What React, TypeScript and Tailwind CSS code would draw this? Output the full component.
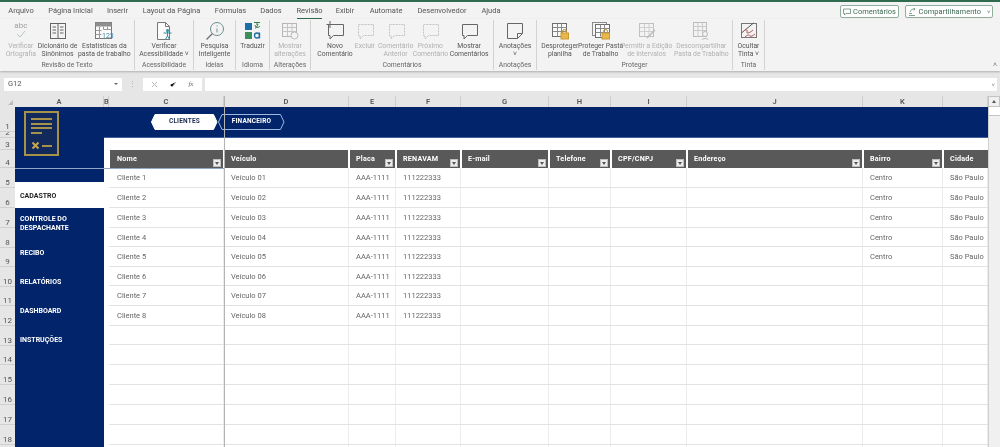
import React from "react";

const FONT = "[font-family:'Roboto','Open_Sans',sans-serif]";

const S = ({ children, w = 22, h = 20 }: { children: React.ReactNode; w?: number; h?: number }) => (
  <svg width={w} height={h} viewBox={`0 0 ${w} ${h}`} fill="none" strokeWidth="1">
    {children}
  </svg>
);

const Comment = ({ c, dash, extra }: { c: string; dash?: boolean; extra?: React.ReactNode }) => (
  <S>
    <path
      d="M4.500 3.500h15v11h-10l-3.500 3.500v-3.500h-1.500z"
      stroke={c}
      strokeDasharray={dash ? "2 1" : undefined}
    />
    {extra}
  </S>
);

const TableLock = ({ second }: { second?: boolean }) => (
  <S>
    {second && <rect x="2.500" y="1.500" width="14" height="13" stroke="#8a8a8a" fill="#f5f5f5" />}
    <rect x={second ? 5.5 : 3.5} y={second ? 3.5 : 2.5} width="14" height="13" stroke="#6d6d6d" fill="#fafafa" />
    <path
      d={second ? "M5.500 7.500h14M5.500 11.500h14M10.500 3.500v12M14.500 3.500v12" : "M3.500 6.500h14M3.500 10.500h14M8.500 2.500v13M12.500 2.500v13"}
      stroke="#8a8a8a"
    />
    <path d="M13.500 12.500v-2a2 2 0 0 1 4 0v2" stroke="#b98b2c" />
    <rect x="12" y="12" width="7.500" height="6" fill="#e8b84a" stroke="#c79a34" />
  </S>
);

const icons: Record<string, React.ReactNode> = {
  abc: (
    <div className="flex flex-col items-center h-[20px] text-[8px] leading-[9px] text-[#a0a0a0]">
      abc
      <S w={14} h={9}>
        <path d="M3 4l3 3 5-6" stroke="#b5c9bd" />
      </S>
    </div>
  ),
  book: (
    <S>
      <rect x="3.500" y="2.500" width="15" height="15" stroke="#666" />
      <path d="M11 2.500v15M5.500 6h3.500M5.500 9h3.500M5.500 12h3.500M13 6h3.500M13 9h3.500M13 12h3.500" stroke="#666" />
    </S>
  ),
  stats: (
    <S>
      <rect x="2.500" y="1.500" width="16" height="16" stroke="#777" fill="#fbfbfb" />
      <rect x="2.500" y="1.500" width="16" height="4" fill="#8f8f8f" />
      <path d="M2.500 9.500h6M2.500 13.500h6M6.500 5.500v12M10.500 5.500v3M14.500 5.500v3M10.500 8.500h8" stroke="#999" />
      <text x="9" y="16.500" fontSize="7" fill="#3b86a8" fontFamily="Roboto">123</text>
    </S>
  ),
  access: (
    <S>
      <path d="M4.500 1.500h8l4 4v13h-12z" stroke="#777" fill="#fcfcfc" />
      <path d="M12.500 1.500v4h4" stroke="#777" />
      <circle cx="14.500" cy="9.500" r="1.500" fill="#2f8f9f" />
      <path d="M10.500 12h8M14.500 11v4l-2.500 4M14.500 15l2.500 4" stroke="#2f8f9f" />
    </S>
  ),
  search: (
    <S>
      <circle cx="13" cy="8" r="6.500" stroke="#6f8f8f" />
      <path d="M8.500 12.500l-6 6" stroke="#777" strokeWidth="1.500" />
      <path d="M13 7.500v4M13 4.500v1" stroke="#6f8f8f" />
    </S>
  ),
  translate: (
    <S>
      <rect x="3" y="2" width="7" height="7" fill="#1c6fa8" />
      <rect x="3" y="11" width="7" height="7" fill="#3c8f5a" />
      <path d="M12 1.500h6M15 1v3M13 4c0 3 4 3 5 1M16 3c-1 3-2 4-3 4" stroke="#2e7d4a" />
      <circle cx="15" cy="14.500" r="2.500" stroke="#1c6fa8" strokeWidth="1.300" />
      <path d="M17.500 11.500v6" stroke="#1c6fa8" strokeWidth="1.300" />
    </S>
  ),
  changes: (
    <S>
      <rect x="3.500" y="2.500" width="14" height="13" stroke="#b5b5b5" />
      <path d="M3.500 6.500h14M3.500 10.500h14M8.500 2.500v13M13 2.500v13" stroke="#c4c4c4" />
      <circle cx="15.500" cy="14.500" r="3.500" stroke="#bbb" fill="#f3f3f3" />
    </S>
  ),
  newc: <Comment c="#666" extra={<path d="M6 0v7M2.500 3.500h7" stroke="#666" />} />,
  del: <Comment c="#c2c2c2" dash />,
  prev: <Comment c="#c2c2c2" dash />,
  next: <Comment c="#c2c2c2" dash />,
  show: <Comment c="#666" />,
  note: (
    <S>
      <path d="M3.500 2.500h15v10l-5 5h-10z" stroke="#666" />
      <path d="M18.500 12.500h-5v5" stroke="#666" />
    </S>
  ),
  lock1: <TableLock />,
  lock2: <TableLock second />,
  perm: (
    <S>
      <rect x="3.500" y="2.500" width="14" height="13" stroke="#c0c0c0" />
      <path d="M3.500 6.500h14M3.500 10.500h14M8.500 2.500v13M13 2.500v13" stroke="#cfcfcf" />
      <path d="M11 17l8-8" stroke="#bbb" strokeWidth="1.500" />
    </S>
  ),
  share: (
    <S>
      <rect x="3.500" y="1.500" width="13" height="14" stroke="#bcbcbc" />
      <path d="M3.500 5.500h13M3.500 9.500h13M8 1.500v14M12.500 1.500v14" stroke="#cacaca" />
      <circle cx="15" cy="13" r="2.500" stroke="#bbb" fill="#f3f3f3" />
      <path d="M12 19c0-2 6-2 6 0" stroke="#bbb" />
    </S>
  ),
  ink: (
    <S>
      <rect x="3.500" y="2.500" width="15" height="14" stroke="#777" />
      <path d="M3.500 12l12-10" stroke="#555" />
      <path d="M5 11c3-4 5-2 4 0s3 1 6-2" stroke="#b05a5a" />
      <path d="M7 16c3-3 5-2 5-1s3 0 5-2" stroke="#b05a5a" />
    </S>
  ),
};

type Item = { icon: string; lines: string[]; w: string; off?: boolean };
type Group = { label: string; w: string; pad?: string; items: Item[] };

const groups: Group[] = [
  {
    label: "Revisão de Texto",
    w: "w-[135px]",
    pad: "pl-[3px] pr-[2px]",
    items: [
      { icon: "abc", lines: ["Verificar", "Ortografia"], w: "w-[36px]", off: true },
      { icon: "book", lines: ["Dicionário de", "Sinônimos"], w: "w-[38px]" },
      { icon: "stats", lines: ["Estatísticas da", "pasta de trabalho"], w: "w-[56px]" },
    ],
  },
  {
    label: "Acessibilidade",
    w: "w-[59px]",
    items: [{ icon: "access", lines: ["Verificar", "Acessibilidade ˅"], w: "w-[58px]" }],
  },
  {
    label: "Ideias",
    w: "w-[42px]",
    items: [{ icon: "search", lines: ["Pesquisa", "Inteligente"], w: "w-[41px]" }],
  },
  {
    label: "Idioma",
    w: "w-[34px]",
    items: [{ icon: "translate", lines: ["Traduzir"], w: "w-[33px]" }],
  },
  {
    label: "Alterações",
    w: "w-[41px]",
    items: [{ icon: "changes", lines: ["Mostrar", "alterações"], w: "w-[40px]", off: true }],
  },
  {
    label: "Comentários",
    w: "w-[183px]",
    pad: "pl-[7px] pr-[2px]",
    items: [
      { icon: "newc", lines: ["Novo", "Comentário"], w: "w-[34px]" },
      { icon: "del", lines: ["Excluir"], w: "w-[26px]", off: true },
      { icon: "prev", lines: ["Comentário", "Anterior"], w: "w-[36px]", off: true },
      { icon: "next", lines: ["Próximo", "Comentário"], w: "w-[34px]", off: true },
      { icon: "show", lines: ["Mostrar", "Comentários"], w: "w-[44px]" },
    ],
  },
  {
    label: "Anotações",
    w: "w-[43px]",
    items: [{ icon: "note", lines: ["Anotações", "˅"], w: "w-[42px]" }],
  },
  {
    label: "Proteger",
    w: "w-[196px]",
    pad: "pl-[3px] pr-[1px]",
    items: [
      { icon: "lock1", lines: ["Desproteger", "planilha"], w: "w-[40px]" },
      { icon: "lock2", lines: ["Proteger Pasta", "de Trabalho"], w: "w-[42px]" },
      { icon: "perm", lines: ["Permitir a Edição", "de Intervalos"], w: "w-[50px]", off: true },
      { icon: "share", lines: ["Descompartilhar", "Pasta de Trabalho"], w: "w-[60px]", off: true },
    ],
  },
  {
    label: "Tinta",
    w: "w-[32px]",
    items: [{ icon: "ink", lines: ["Ocultar", "Tinta ˅"], w: "w-[31px]" }],
  },
];

const tabs = [
  ["Arquivo", "w-[42px]"],
  ["Página Inicial", "w-[57px]"],
  ["Inserir", "w-[37px]"],
  ["Layout da Página", "w-[71px]"],
  ["Fórmulas", "w-[47px]"],
  ["Dados", "w-[34px]"],
  ["Revisão", "w-[43px]"],
  ["Exibir", "w-[28px]"],
  ["Automate", "w-[54px]"],
  ["Desenvolvedor", "w-[58px]"],
  ["Ajuda", "w-[40px]"],
];

const colHeads = [
  ["A", "w-[89px]"],
  ["B", "w-[5px]"],
  ["C", "w-[115px]"],
  ["D", "w-[125px]"],
  ["E", "w-[47px]"],
  ["F", "w-[65px]"],
  ["G", "w-[88px]"],
  ["H", "w-[62px]"],
  ["I", "w-[76px]"],
  ["J", "w-[176px]"],
  ["K", "w-[80px]"],
  ["", "w-[45px]"],
];

const rowHeads = [
  ["1", "h-[25px]"],
  ["2", "h-[6px]"],
  ["3", "h-[12px]"],
  ["4", "h-[18px]"],
  ["5", "h-[20px]"],
  ["6", "h-[20px]"],
  ["7", "h-[20px]"],
  ["8", "h-[20px]"],
  ["9", "h-[19px]"],
  ["10", "h-[20px]"],
  ["11", "h-[19px]"],
  ["12", "h-[20px]"],
  ["13", "h-[20px]"],
  ["14", "h-[19px]"],
  ["15", "h-[20px]"],
  ["16", "h-[20px]"],
  ["17", "h-[20px]"],
  ["18", "h-[20px]"],
];

const GRID =
  "grid grid-cols-[115px_125px_47px_65px_88px_62px_76px_176px_80px_45px]";

const headers: [string, boolean][] = [
  ["Nome", true],
  ["Veículo", false],
  ["Placa", true],
  ["RENAVAM", true],
  ["E-mail", true],
  ["Telefone", true],
  ["CPF/CNPJ", true],
  ["Endereço", true],
  ["Bairro", true],
  ["Cidade", false],
];

const rowHeights = [
  "h-[20px]", "h-[20px]", "h-[20px]", "h-[19px]", "h-[20px]", "h-[19px]", "h-[20px]",
  "h-[20px]", "h-[19px]", "h-[20px]", "h-[20px]", "h-[20px]", "h-[20px]", "h-[20px]", "h-[20px]",
];

function rowCells(i: number): string[] {
  const n = i + 1;
  if (i >= 8) return Array(10).fill("");
  return [
    `Cliente ${n}`,
    `Veículo 0${n}`,
    "AAA-1111",
    "111222333",
    "",
    "",
    "",
    "",
    i < 5 ? "Centro" : "",
    i < 5 ? "São Paulo" : "",
  ];
}

const FilterBtn = () => (
  <span className="absolute right-[2px] bottom-[1px] w-[8px] h-[8px] bg-[#ececec] border border-[#bdbdbd] flex items-center justify-center">
    <span className="w-0 h-0 border-x-[2px] border-x-transparent border-t-[3px] border-t-[#555]" />
  </span>
);

const Hex = ({ filled, label }: { filled?: boolean; label: string }) => (
  <div
    className={`relative w-[67px] h-[16px] flex items-center justify-center text-[6.5px] font-bold tracking-[0.2px] ${
      filled ? "text-[#1a2a50]" : "text-white"
    }`}
  >
    <svg className="absolute inset-0" width="67" height="16" viewBox="0 0 67 16">
      <path
        d="M4 .5H62.500L66 8 62.500 15.500H4L.5 8z"
        fill={filled ? "#ffffff" : "none"}
        stroke={filled ? "#ffffff" : "#9fb6e0"}
      />
    </svg>
    <span className="relative">{label}</span>
  </div>
);

const Logo = () => (
  <div className="ml-[9px] mt-[4px] w-[35px] h-[45px] border-[2px] border-[#a8924a] bg-[#12295c] px-[5px] pt-[5px] flex flex-col gap-[2.500px]">
    <div className="h-[2px] w-[21px] bg-[#a8924a]" />
    <div className="h-[2px] w-[21px] bg-[#a8924a]" />
    <div className="h-[2px] w-[21px] bg-[#a8924a]" />
    <div className="h-[2px] w-[11px] bg-[#a8924a]" />
    <div className="mt-[5px] flex items-center gap-[2px]">
      <svg width="9" height="9" viewBox="0 0 9 9">
        <path d="M1.500 1.500l6 6M7.500 1.500l-6 6" stroke="#c4a850" strokeWidth="2" />
      </svg>
      <div className="h-[2px] w-[10px] bg-[#a8924a]" />
    </div>
  </div>
);

export default function App() {
  return (
    <div className={`w-[1000px] h-[447px] overflow-hidden relative flex flex-col bg-[#e8e8e8] blur-[0.3px] ${FONT}`}>
      <div className="h-[2px] bg-[#2f6b4f] shrink-0" />

      {/* Tabs */}
      <div className="h-[17px] shrink-0 bg-[#f3f3f3] flex items-center text-[7.5px] text-[#555] relative">
        {tabs.map(([t, w]) => (
          <div key={t} className={`${w} h-full flex items-center justify-center relative`}>
            {t}
            {t === "Revisão" && (
              <span className="absolute left-[9px] right-[9px] bottom-0 h-[1.500px] bg-[#2f6b4f]" />
            )}
          </div>
        ))}
        <div className="ml-auto flex gap-[6px] pr-[7px] pt-[2px]">
          <div className="w-[59px] h-[13px] border border-[#8fae9c] rounded-[2px] bg-white flex items-center justify-center text-[7.5px] text-[#3f6b55]">
            <svg width="8" height="8" viewBox="0 0 8 8" className="mr-[2px]">
              <path d="M.5 1h7v4.500H3L1.500 7V5.500h-1z" stroke="#4f7a63" fill="none" strokeWidth="0.7" />
            </svg>
            Comentários
          </div>
          <div className="w-[88px] h-[13px] border border-[#8fae9c] rounded-[2px] bg-white flex items-center justify-center text-[7.5px] text-[#3f6b55]">
            <svg width="8" height="8" viewBox="0 0 8 8" className="mr-[3px]">
              <path d="M1 7.500h6M1 5.500h3M2 4c1-3 3-3 5-3M5.500 0l1.500 1-1.500 1.500" stroke="#4f7a63" fill="none" strokeWidth="0.7" />
            </svg>
            Compartilhamento
            <span className="ml-[6px] text-[6px]">˅</span>
          </div>
        </div>
      </div>

      {/* Ribbon */}
      <div className="h-[52px] shrink-0 bg-[#f3f3f3] flex shadow-[0_1px_2px_rgba(0,0,0,0.25)] relative z-10 pt-[1px]">
        {groups.map((g) => (
          <div key={g.label} className={`${g.w} h-[50px] flex flex-col border-r border-[#d2d2d2]`}>
            <div className={`flex flex-1 justify-center ${g.pad ?? ""}`}>
              {g.items.map((it) => (
                <div
                  key={it.lines[0]}
                  className={`${it.w} flex flex-col items-center text-[6.8px] leading-[8px] whitespace-nowrap ${
                    it.off ? "text-[#b0b0b0]" : "text-[#555]"
                  }`}
                >
                  <div className="h-[22px] flex items-center justify-center">{icons[it.icon]}</div>
                  {it.lines.map((l) => (
                    <span key={l}>{l}</span>
                  ))}
                </div>
              ))}
            </div>
            <div className="h-[9px] leading-[9px] text-center text-[6.8px] text-[#666]">{g.label}</div>
          </div>
        ))}
        <span className="absolute right-[3px] bottom-[1px] text-[7px] text-[#777]">˄</span>
      </div>

      {/* Formula bar */}
      <div className="h-[25px] shrink-0 flex items-center gap-[3px] bg-[#e6e6e6] pl-[4px] pr-[3px] pt-[1px]">
        <div className="w-[118px] h-[13px] bg-white flex items-center justify-between px-[4px] text-[7.5px] text-[#555]">
          G12
          <span className="w-0 h-0 border-x-[2px] border-x-transparent border-t-[2.500px] border-t-[#666]" />
        </div>
        <div className="w-[15px] text-center text-[7px] text-[#aaa]">⋮</div>
        <div className="w-[59px] h-[13px] bg-white flex items-center justify-around px-[3px] text-[8px] text-[#999]">
          <svg width="7" height="7" viewBox="0 0 7 7">
            <path d="M1 1l5 5M6 1L1 6" stroke="#b5b5b5" />
          </svg>
          <svg width="8" height="7" viewBox="0 0 8 7">
            <path d="M1 4l2 2 4-5" stroke="#b5b5b5" />
          </svg>
          <span className="italic text-[7px] text-[#666] [font-family:'Liberation_Serif',serif]">fx</span>
        </div>
        <div className="flex-1 h-[13px] bg-white flex items-center justify-end pr-[2px] text-[6px] text-[#777]">˅</div>
      </div>

      {/* Column headers */}
      <div className="h-[11px] shrink-0 flex bg-[#e6e6e6] text-[7.5px] font-semibold leading-[11px] text-[#555]">
        <div className="w-[15px] shrink-0 relative">
          <span className="absolute right-[2px] bottom-[2px] w-0 h-0 border-l-[5px] border-l-transparent border-b-[5px] border-b-[#bdbdbd]" />
        </div>
        {colHeads.map(([c, w], i) => (
          <div key={i} className={`${w} shrink-0 text-center border-r border-[#cfcfcf]`}>
            {c}
          </div>
        ))}
        <div className="flex-1 bg-[#f0f0f0] border border-[#c4c4c4] flex items-center justify-center">
          <span className="w-0 h-0 border-x-[2.500px] border-x-transparent border-b-[3px] border-b-[#555]" />
        </div>
      </div>

      {/* Sheet */}
      <div className="flex-1 min-h-0 flex overflow-hidden">
        <div className="w-[15px] shrink-0 bg-[#e6e6e6] flex flex-col text-[8px] text-[#555]">
          {rowHeads.map(([r, h]) => (
            <div
              key={r}
              className={`${h} shrink-0 overflow-hidden flex items-end justify-center leading-[9px] border-b border-[#d0d0d0]`}
            >
              {r}
            </div>
          ))}
        </div>

        <div className="w-[89px] shrink-0 bg-[#02246a] flex flex-col text-[7px] font-bold text-white leading-[9px]">
          <div className="h-[75px] shrink-0">
            <Logo />
          </div>
          <div className="h-[26px] shrink-0 bg-white text-[#222] flex items-center pl-[5px] pt-[2px]">CADASTRO</div>
          <div className="h-[29px] shrink-0 flex items-center pl-[5px] pt-[3px]">
            CONTROLE DO
            <br />
            DESPACHANTE
          </div>
          <div className="h-[30px] shrink-0 flex items-center pl-[5px] pt-[2px]">RECIBO</div>
          <div className="h-[28px] shrink-0 flex items-center pl-[5px] pt-[2px]">RELATÓRIOS</div>
          <div className="h-[30px] shrink-0 flex items-center pl-[5px] pt-[2px]">DASHBOARD</div>
          <div className="h-[28px] shrink-0 flex items-center pl-[5px] pt-[2px]">INSTRUÇÕES</div>
        </div>

        <div className="w-[884px] shrink-0 bg-white flex flex-col overflow-hidden">
          <div className="h-[31px] shrink-0 bg-[#02246a] flex pl-[47px] pt-[7px] border-b border-[#3f5f9f]">
            <Hex filled label="CLIENTES" />
            <Hex label="FINANCEIRO" />
          </div>
          <div className="h-[12px] shrink-0" />
          <div className="pl-[5px]">
            <div className={`${GRID} h-[18px]`}>
              {headers.map(([h, f]) => (
                <div
                  key={h}
                  className="relative bg-[#595959] border-l-[1px] border-r-[1px] border-white last:border-r-0 text-white text-[7.2px] font-bold pl-[6px] first:pl-[7px] pt-[4px] leading-[10px] tracking-[0.2px]"
                >
                  {h}
                  {f && <FilterBtn />}
                </div>
              ))}
            </div>
            {rowHeights.map((h, i) => (
              <div key={i} className={`${GRID} ${h} border-b border-[#e2e2e2]`}>
                {rowCells(i).map((c, j) => (
                  <div
                    key={j}
                    className="border-r border-[#ececec] flex items-center pl-[7px] first:pl-[8px] pt-[1px] text-[7.5px] text-[#666] whitespace-nowrap overflow-hidden"
                  >
                    {c}
                  </div>
                ))}
              </div>
            ))}
          </div>
        </div>

        <div className="flex-1 bg-[#f0f0f0] border-l border-[#d0d0d0]">
          <div className="h-[9px] bg-white border-b border-[#c4c4c4]" />
        </div>
      </div>

      {/* Frozen pane lines */}
      <div className="absolute left-[224px] top-[96px] bottom-0 w-[1px] bg-[#b4b4b4]" />
      <div className="absolute left-[15px] top-[168px] w-[209px] h-[1px] bg-[#92a6c6]" />
    </div>
  );
}
